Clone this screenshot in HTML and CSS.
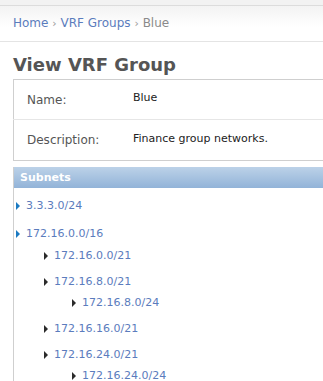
FILE: index.html
```html
<!DOCTYPE html>
<html lang="en">
<head>
  <meta charset="UTF-8">
  <title>View VRF Group</title>
  <link rel="stylesheet" href="styles.css">
</head>
<body>

  <div class="topbar"></div>

  <div class="crumbs">
    <a href="#">Home</a> <span class="sep">&rsaquo;</span>
    <a href="#">VRF Groups</a> <span class="sep">&rsaquo;</span>
    <span class="current">Blue</span>
  </div>

  <div class="content">
    <h1>View VRF Group</h1>

    <table class="details">
      <tr>
        <th>Name:</th>
        <td>Blue</td>
      </tr>
      <tr>
        <th>Description:</th>
        <td>Finance group networks.</td>
      </tr>
    </table>

    <div class="panel">
      <div class="panel-head">Subnets</div>
      <ul class="tree">
        <li><a href="#">3.3.3.0/24</a></li>
        <li><a href="#">172.16.0.0/16</a>
          <ul>
            <li><a href="#">172.16.0.0/21</a></li>
            <li><a href="#">172.16.8.0/21</a>
              <ul>
                <li><a href="#">172.16.8.0/24</a></li>
              </ul>
            </li>
            <li><a href="#">172.16.16.0/21</a></li>
            <li><a href="#">172.16.24.0/21</a>
              <ul>
                <li><a href="#">172.16.24.0/24</a></li>
              </ul>
            </li>
          </ul>
        </li>
      </ul>
    </div>
  </div>

</body>
</html>
```

FILE: styles.css
```css
body {
  margin: 0;
  font-family: "DejaVu Sans", Verdana, sans-serif;
  background: #fff;
  overflow: hidden;
}

a {
  color: #5b7cbd;
  text-decoration: none;
}

.topbar {
  height: 5px;
  background: #f2f2f2;
  border-bottom: 1px solid #dcdcdc;
}

.crumbs {
  height: 35px;
  line-height: 35px;
  padding-left: 13px;
  font-size: 12px;
  background: linear-gradient(#f3f3f3, #fff 60%);
  border-bottom: 1px solid #e4e4e4;
  white-space: nowrap;
}

.crumbs .sep {
  color: #999;
  font-size: 11px;
}

.crumbs .current {
  color: #8a8a8a;
}

.content {
  padding-left: 13px;
}

h1 {
  margin: 12px 0 3px;
  font-size: 18px;
  line-height: 22px;
  color: #555;
}

.details {
  width: 100%;
  border: 1px solid #cfcfcf;
  border-right: none;
  border-collapse: collapse;
  font-size: 12px;
}

.details th {
  width: 106px;
  height: 39px;
  padding: 0 0 0 13px;
  text-align: left;
  font-weight: normal;
  color: #555;
}

.details td {
  padding: 0;
  font-size: 11px;
  color: #222;
  vertical-align: middle;
  position: relative;
  top: -2px;
}

.details tr + tr th,
.details tr + tr td {
  border-top: 1px solid #e6e6e6;
}

.details tr + tr th {
  height: 40px;
}

.panel {
  margin-top: 6px;
  border-left: 1px solid #cfcfcf;
}

.panel-head {
  height: 21px;
  line-height: 21px;
  padding-left: 6px;
  font-size: 11px;
  font-weight: bold;
  color: #fff;
  background: linear-gradient(#bcd2e8, #92b3d8);
}

.tree,
.tree ul {
  list-style: none;
  margin: 0;
  padding: 0;
}

.tree {
  padding: 9px 0 0 2px;
}

.tree li {
  font-size: 11px;
  line-height: 17px;
  margin-bottom: 11px;
}

.tree ul {
  margin-top: 5px;
  padding-left: 28px;
}

.tree ul li {
  margin-bottom: 9px;
}

.tree ul ul {
  margin-top: 4px;
}

.tree a::before {
  content: "";
  display: inline-block;
  width: 0;
  height: 0;
  border-top: 4px solid transparent;
  border-bottom: 4px solid transparent;
  border-left: 4px solid #1b7ac2;
  margin-right: 6px;
  vertical-align: -1px;
}

.tree ul a::before {
  border-left-color: #2b2b2b;
}
```
